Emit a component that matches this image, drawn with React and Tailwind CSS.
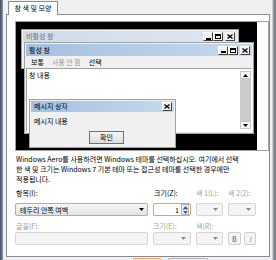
const FONT = "font-['Noto_Sans_CJK_KR','Noto_Sans',sans-serif]"

function CapButton({ children, className = '' }) {
  return (
    <div
      className={`flex h-[9px] w-[10px] items-center justify-center border border-t-white border-l-white border-r-[#404040] border-b-[#404040] bg-[#f0f0f0] ${className}`}
    >
      {children}
    </div>
  )
}

function CloseGlyph() {
  return (
    <svg width="6" height="5" viewBox="0 0 6 5">
      <path d="M0.5 0.5 L5.5 4.5 M5.5 0.5 L0.5 4.5" stroke="#000" strokeWidth="1.3" />
    </svg>
  )
}

function CaptionButtons({ full = true }) {
  return (
    <div className="flex items-center">
      {full && (
        <>
          <CapButton>
            <div className="mt-[4px] h-[2px] w-[5px] bg-black" />
          </CapButton>
          <CapButton>
            <div className="h-[5px] w-[6px] border border-t-2 border-black" />
          </CapButton>
        </>
      )}
      <CapButton className={full ? 'ml-[2px]' : ''}>
        <CloseGlyph />
      </CapButton>
    </div>
  )
}

function Arrow({ color = '#000', up = false }) {
  return (
    <svg width="5" height="3" viewBox="0 0 5 3">
      <path d={up ? 'M0 3 L2.5 0 L5 3 Z' : 'M0 0 L5 0 L2.5 3 Z'} fill={color} />
    </svg>
  )
}

function Preview() {
  return (
    <div className="border border-[#a0a0a0]">
      <div className="relative h-[128px] w-[241px] overflow-hidden bg-black">
        {/* inactive window */}
        <div className="absolute left-[5px] top-[7px] h-[40px] w-[218px] border border-[#a0a0a0] bg-[#f0f0f0] p-px">
          <div className="flex h-[11px] items-center justify-between bg-gradient-to-r from-[#cfdbe9] to-[#dde7f3] pl-[3px] pr-[2px]">
            <span className="text-[7px] leading-none text-[#6f6f6f]">비활성 창</span>
            <CaptionButtons />
          </div>
        </div>

        {/* active window */}
        <div className="absolute left-[8px] top-[20px] flex h-[92px] w-[230px] flex-col border border-[#a0a0a0] bg-[#f0f0f0] p-px">
          <div className="flex h-[12px] items-center justify-between bg-gradient-to-r from-[#a4c0e0] to-[#c6d9ee] pl-[3px] pr-[2px]">
            <span className="text-[7px] leading-none text-black">활성 창</span>
            <CaptionButtons />
          </div>
          <div className="flex h-[12px] items-center gap-[8px] pl-[5px] text-[7px] leading-none">
            <span className="text-black">보통</span>
            <span className="text-[#9a9a9a]">사용 안 함</span>
            <span className="text-black">선택</span>
          </div>
          <div className="relative flex-1 border border-t-[#a0a0a0] border-l-[#a0a0a0] border-r-white border-b-white bg-white">
            <span className="absolute left-[2px] top-[3px] text-[7px] leading-none text-black">창 내용</span>
            <div className="absolute bottom-[2px] right-0 top-[2px] flex w-[11px] flex-col">
              <div className="flex h-[8px] items-center justify-center border border-[#c8c8c8] bg-[#f4f4f4]">
                <Arrow up />
              </div>
              <div className="flex-1 bg-[#cbcbcb]" />
              <div className="flex h-[8px] items-center justify-center border border-[#c8c8c8] bg-[#f4f4f4]">
                <Arrow />
              </div>
            </div>
          </div>
        </div>

        {/* message box */}
        <div className="absolute left-[13px] top-[77px] flex h-[49px] w-[147px] flex-col border border-[#a0a0a0] bg-[#f0f0f0] p-px">
          <div className="flex h-[11px] items-center justify-between bg-gradient-to-r from-[#a4c0e0] to-[#c6d9ee] pl-[3px] pr-[2px]">
            <span className="text-[7px] leading-none text-black">메시지 상자</span>
            <CaptionButtons full={false} />
          </div>
          <div className="mt-[4px] pl-[3px] text-[7px] leading-[10px] text-black">메시지 내용</div>
          <div className="ml-[58px] mt-[5px] flex h-[13px] w-[35px] items-center justify-center border border-[#707070] bg-gradient-to-b from-[#f6f6f6] to-[#dcdcdc] text-[7px] leading-none text-black">
            확인
          </div>
        </div>
      </div>
    </div>
  )
}

function DisabledCombo() {
  return (
    <div className="flex h-[13px] items-center justify-end rounded-[2px] border border-[#d5d5d5] bg-[#f4f4f4] pr-[4px]">
      <Arrow color="#8a8a8a" />
    </div>
  )
}

export default function App() {
  return (
    <div className={`flex h-[260px] w-[276px] overflow-hidden bg-[#f0f0f0] ${FONT}`}>
      <div className="w-[3px] bg-gradient-to-r from-[#3e4c60] to-[#8b97a6]" />

      <div className="flex w-[269px] flex-col pl-[3px] pr-[2px]">
        <div className="flex h-[14px] items-end pl-[2px]">
          <div className="relative z-10 -mb-px flex h-[14px] w-[50px] items-center justify-center border border-b-0 border-[#898c95] bg-white text-[7px] leading-none text-black">
            창 색 및 모양
          </div>
        </div>

        <div className="h-[243px] border border-[#898c95] bg-white pl-[8px] pt-[6px]">
          <Preview />

          <div className="mt-[3px] pl-px text-[7px] leading-[10px] text-black">
            <div className="whitespace-nowrap">Windows Aero를 사용하려면 Windows 테마를 선택하십시오. 여기에서 선택</div>
            <div className="whitespace-nowrap">한 색 및 크기는 Windows 7 기본 테마 또는 접근성 테마를 선택한 경우에만</div>
            <div className="whitespace-nowrap">적용됩니다.</div>
          </div>

          <div className="mt-[4px] grid grid-cols-[133px_38px_27px_28px] gap-x-[5px] text-[7px] leading-[10px]">
            <span className="pl-px text-black">항목(I):</span>
            <span className="pl-px text-black">크기(Z):</span>
            <span className="text-[#a0a0a0]">색 1(L):</span>
            <span className="text-[#a0a0a0]">색 2(2):</span>

            <div className="mt-[5px] flex h-[13px] items-center justify-between rounded-[2px] border border-[#e5a552] bg-gradient-to-b from-[#f7f7f7] to-[#e2e2e2] pl-[4px] pr-[3px]">
              <span className="text-black">테두리 안쪽 여백</span>
              <Arrow />
            </div>
            <div className="mt-[5px] flex h-[13px] items-center rounded-[2px] border border-[#e5a552] bg-white">
              <span className="flex-1 pr-[2px] text-right text-black">1</span>
              <div className="mr-px flex h-[11px] w-[8px] flex-col">
                <div className="flex flex-1 items-center justify-center border border-[#a8b8cc] bg-[#eef3f9]">
                  <Arrow color="#3a5a8a" up />
                </div>
                <div className="flex flex-1 items-center justify-center border border-t-0 border-[#a8b8cc] bg-[#eef3f9]">
                  <Arrow color="#3a5a8a" />
                </div>
              </div>
            </div>
            <div className="mt-[5px]">
              <DisabledCombo />
            </div>
            <div className="mt-[5px]">
              <DisabledCombo />
            </div>

            <span className="mt-[5px] pl-px text-[#a0a0a0]">글꼴(F):</span>
            <span className="mt-[5px] text-[#a0a0a0]">크기(E):</span>
            <span className="mt-[5px] text-[#a0a0a0]">색(R):</span>
            <span className="mt-[5px]" />

            <div className="mt-px h-[13px] rounded-[2px] border border-[#d5d5d5] bg-[#f4f4f4]" />
            <div className="mt-px">
              <DisabledCombo />
            </div>
            <div className="mt-px">
              <DisabledCombo />
            </div>
            <div className="mt-px flex gap-[3px]">
              <div className="flex h-[13px] w-[13px] items-center justify-center rounded-[2px] border border-[#cfcfcf] bg-[#f4f4f4] font-bold text-[#8a8a8a]">
                B
              </div>
              <div className="flex h-[13px] w-[12px] items-center justify-center rounded-[2px] border border-[#cfcfcf] bg-[#f4f4f4] italic text-[#8a8a8a]">
                I
              </div>
            </div>
          </div>
        </div>

        <div className="mt-px flex h-[2px]">
          <div className="ml-[127px] w-[28px] rounded-t-[2px] border border-b-0 border-[#e8a860] bg-[#fbefe0]" />
          <div className="ml-[7px] w-[40px] rounded-t-[2px] border border-b-0 border-[#b0b0b0] bg-[#f4f4f4]" />
        </div>
      </div>

      <div className="w-[4px] border-l border-[#d0d0d0] bg-gradient-to-r from-[#9aa2ac] to-[#6e7783]" />
    </div>
  )
}
